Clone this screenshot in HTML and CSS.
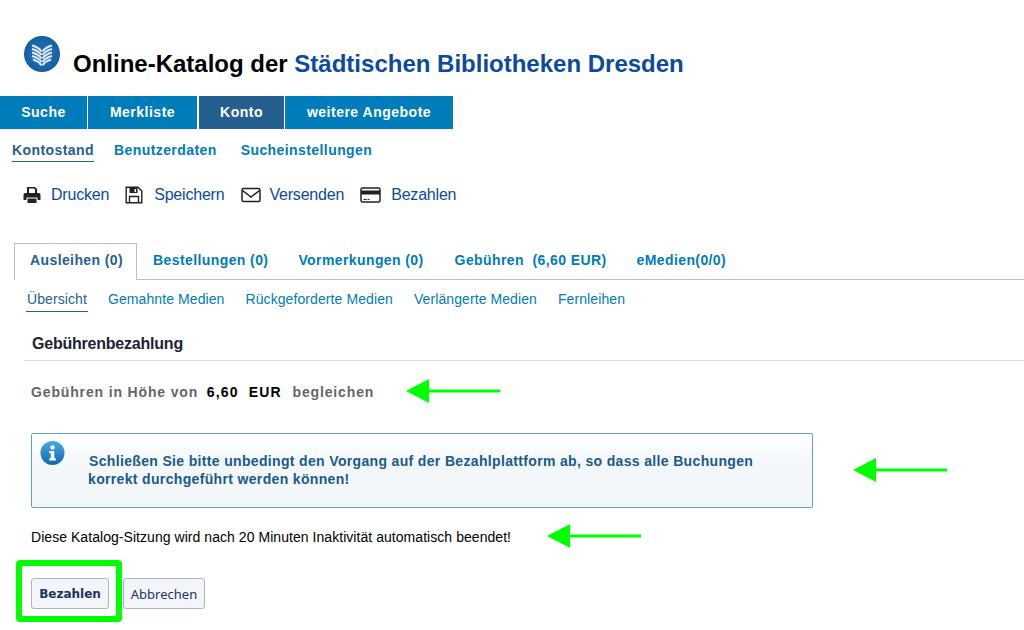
FILE: index.html
```html
<!DOCTYPE html>
<html lang="de">
<head>
<meta charset="utf-8">
<title>Online-Katalog der Städtischen Bibliotheken Dresden</title>
<link rel="stylesheet" href="styles.css">
</head>
<body>
<header class="brand">
  <svg class="logo" viewBox="0 0 36 36" aria-hidden="true">
    <defs>
      <radialGradient id="logoGrad" cx="0.5" cy="0.5" r="0.55">
        <stop offset="0.6" stop-color="#1a68b0"/>
        <stop offset="1" stop-color="#145a9c"/>
      </radialGradient>
    </defs>
    <circle cx="18" cy="18" r="18" fill="url(#logoGrad)"/>
    <g fill="none" stroke="#dfe9f3" stroke-width="2.100">
      <path d="M8 9.500 C12 10.500 15.500 12.500 17.500 15.500"/>
      <path d="M8 13 C12 14 15.500 16 17.500 19"/>
      <path d="M8 16.500 C12 17.500 15.500 19.500 17.500 22.500"/>
      <path d="M8 20 C12 21 15.500 23 17.500 26"/>
      <path d="M9 23.500 C12.500 24.500 15.500 26.500 17.500 29.300"/>
      <path d="M28 9.500 C24 10.500 20.500 12.500 18.500 15.500"/>
      <path d="M28 13 C24 14 20.500 16 18.500 19"/>
      <path d="M28 16.500 C24 17.500 20.500 19.500 18.500 22.500"/>
      <path d="M28 20 C24 21 20.500 23 18.500 26"/>
      <path d="M27 23.500 C23.500 24.500 20.500 26.500 18.500 29.300"/>
    </g>
  </svg>
  <h1 class="title">Online-Katalog der <span class="title-accent">Städtischen Bibliotheken Dresden</span></h1>
</header>

<nav class="mainnav">
  <a class="mainnav-item item-suche">Suche</a>
  <a class="mainnav-item item-merk">Merkliste</a>
  <a class="mainnav-item item-konto is-active">Konto</a>
  <a class="mainnav-item item-weitere">weitere Angebote</a>
</nav>

<nav class="subnav">
  <a class="subnav-item is-active">Kontostand</a>
  <a class="subnav-item">Benutzerdaten</a>
  <a class="subnav-item">Sucheinstellungen</a>
</nav>

<div class="tools">
  <a class="tool tool-print">
    <svg class="tool-icon" viewBox="0 0 18 18" aria-hidden="true">
      <path fill="#222" d="M4 1h8l2 2v4h-2V3.500L11 2.500H6V7H4z"/>
      <path fill="#222" d="M2.500 7h13A2 2 0 0 1 17.500 9v5h-3v-2.500h-11V14h-3V9a2 2 0 0 1 2-2z"/>
      <path fill="#222" d="M4.500 12.500h9V17h-9z"/>
    </svg>Drucken</a>
  <a class="tool tool-save">
    <svg class="tool-icon" viewBox="0 0 18 18" aria-hidden="true">
      <path fill="none" stroke="#222" stroke-width="1.400" d="M1.200 1.200h11.800L16.800 5v11.800H1.200z"/>
      <path fill="#222" d="M4.500 2h8v5h-8z"/>
      <path fill="#fff" d="M9.500 3h1.500v3H9.500z"/>
      <path fill="none" stroke="#222" stroke-width="1.400" d="M4.500 16.500v-6h9v6"/>
    </svg>Speichern</a>
  <a class="tool tool-mail">
    <svg class="tool-icon icon-mail" viewBox="0 0 20 16" aria-hidden="true">
      <rect x="1" y="1.500" width="18" height="13" rx="1.500" fill="none" stroke="#222" stroke-width="1.500"/>
      <path fill="none" stroke="#222" stroke-width="1.500" d="M1.500 3.500 10 10l8.500-6.500"/>
    </svg>Versenden</a>
  <a class="tool tool-pay">
    <svg class="tool-icon icon-card" viewBox="0 0 21 16" aria-hidden="true">
      <rect x="1" y="1" width="19" height="14" rx="1.500" fill="none" stroke="#222" stroke-width="1.500"/>
      <path fill="#222" d="M1 3.500h19v4H1zM3.500 12h3v1h-3zM7.500 12h2v1h-2z"/>
    </svg>Bezahlen</a>
</div>

<nav class="tabs">
  <a class="tab is-active">Ausleihen (0)</a>
  <a class="tab">Bestellungen (0)</a>
  <a class="tab">Vormerkungen (0)</a>
  <a class="tab tab-fees">Gebühren  (6,60 EUR)</a>
  <a class="tab">eMedien(0/0)</a>
</nav>

<nav class="subtabs">
  <a class="subtab is-active">Übersicht</a>
  <a class="subtab">Gemahnte Medien</a>
  <a class="subtab">Rückgeforderte Medien</a>
  <a class="subtab">Verlängerte Medien</a>
  <a class="subtab">Fernleihen</a>
</nav>

<main class="content">
  <h2 class="heading">Gebührenbezahlung</h2>
  <p class="amount">Gebühren in Höhe von <b class="amount-value">6,60  EUR</b> begleichen</p>
  <div class="notice">
    <svg class="notice-icon" viewBox="0 0 24 24" aria-hidden="true">
      <defs>
        <linearGradient id="infoGrad" x1="0" y1="0" x2="0" y2="1">
          <stop offset="0" stop-color="#4aa8e6"/>
          <stop offset="1" stop-color="#0f67ae"/>
        </linearGradient>
      </defs>
      <circle cx="12" cy="12" r="12" fill="url(#infoGrad)"/>
      <circle cx="12" cy="6.500" r="2.200" fill="#fff"/>
      <path fill="#fff" d="M8.800 10h5v7.200h1.500V19.500H8.800v-2.300h1.500v-4.900H8.800z"/>
    </svg>
    <p class="notice-text"><span class="notice-first">Schließen Sie bitte unbedingt den Vorgang auf der Bezahlplattform ab, so dass alle Buchungen</span><br>korrekt durchgeführt werden können!</p>
  </div>
  <p class="session">Diese Katalog-Sitzung wird nach 20 Minuten Inaktivität automatisch beendet!</p>
  <div class="buttons">
    <button class="btn btn-primary" type="button">Bezahlen</button>
    <button class="btn btn-secondary" type="button">Abbrechen</button>
  </div>
</main>

<svg class="arrow arrow-1" viewBox="0 0 94 24" aria-hidden="true"><path fill="#00ff00" d="M0 12 23 0v10.500h71v3H23V24z"/></svg>
<svg class="arrow arrow-2" viewBox="0 0 94 24" aria-hidden="true"><path fill="#00ff00" d="M0 12 23 0v10.500h71v3H23V24z"/></svg>
<svg class="arrow arrow-3" viewBox="0 0 94 24" aria-hidden="true"><path fill="#00ff00" d="M0 12 23 0v10.500h71v3H23V24z"/></svg>
<div class="highlight"></div>
</body>
</html>
```
FILE: styles.css
```css
html, body { margin: 0; padding: 0; }
body {
  position: relative;
  width: 1024px;
  height: 630px;
  overflow: hidden;
  background: #fff;
  font-family: "Liberation Sans", Arial, sans-serif;
  color: #000;
}
a { display: block; }

.brand { display: flex; align-items: flex-start; height: 96px; padding-left: 24px; box-sizing: border-box; padding-top: 36px; }
.logo { width: 36px; height: 36px; flex: none; }
.title { margin: 13px 0 0 13px; font-size: 24px; line-height: 30px; font-weight: 700; white-space: nowrap; }
.title-accent { color: #0b4a9c; }

.mainnav { display: flex; height: 33px; }
.mainnav-item { background: #007cba; color: #fff; font-size: 14px; font-weight: 700; line-height: 33px; letter-spacing: 0.5px; text-align: center; box-sizing: border-box; border-right: 1px solid #fff; }
.item-suche { width: 88px; }
.item-merk { width: 110px; }
.item-konto { width: 87px; background: #255f90; background-clip: padding-box; border-left: 1px solid #fff; }
.item-weitere { width: 168px; border-right: 0; }

.subnav { display: flex; height: 34px; padding-left: 12px; gap: 20px; }
.subnav-item { height: 33px; box-sizing: border-box; padding-top: 13px; font-size: 14px; line-height: 16px; font-weight: 700; letter-spacing: 0.42px; color: #007cba; }
.subnav-item + .subnav-item + .subnav-item { margin-left: 4px; }
.subnav-item.is-active { color: #255f90; border-bottom: 1px solid #255f90; }

.tools { display: flex; height: 63px; padding: 14px 0 0 23px; box-sizing: border-box; align-items: flex-start; }
.tool { display: flex; align-items: center; height: 36px; font-size: 16px; letter-spacing: -0.2px; color: #0b4a9c; }
.tool-icon { width: 18px; height: 18px; margin-right: 10px; }
.tool-save { margin-left: 16px; }
.tool-save .tool-icon { margin-right: 11px; }
.tool-mail { margin-left: 17px; }
.tool-pay { margin-left: 16px; }
.icon-mail { width: 20px; height: 16px; margin-right: 8px; }
.icon-card { width: 21px; height: 16px; margin-right: 10px; }

.tabs { display: flex; height: 37px; margin: 17px 0 0 14px; box-sizing: border-box; border-bottom: 1px solid #bdbdbd; }
.tab { padding: 0 13px 0 15px; height: 36px; line-height: 32px; font-size: 14px; font-weight: 700; letter-spacing: 0.4px; color: #007cba; white-space: pre; box-sizing: border-box; border: 1px solid transparent; border-bottom: 0; }
.tab.is-active { color: #255f90; background: #fff; border-color: #bdbdbd; height: 37px; }
.tab-fees { margin-left: 1px; }

.subtabs { display: flex; height: 32px; padding-left: 26px; gap: 19px; }
.subtab { height: 32px; box-sizing: border-box; padding: 10px 1px 0; font-size: 14px; line-height: 19px; letter-spacing: 0.09px; color: #007cba; }
.subtab.is-active { color: #255f90; border-bottom: 1px solid #255f90; }

.content { margin-left: 24px; }
.heading { margin: 0; height: 49px; box-sizing: border-box; padding: 22px 0 0 8px; font-size: 16px; line-height: 20px; font-weight: 700; letter-spacing: -0.22px; color: #1c2430; border-bottom: 1px solid #d9d9d9; }
.amount { margin: 22px 0 0 7px; height: 18px; font-size: 14px; line-height: 18px; font-weight: 700; letter-spacing: 0.85px; color: #666; white-space: pre; }
.amount-value { color: #000; margin: 0 6px 0 4px; letter-spacing: 1.15px; white-space: pre; }
.notice { position: relative; width: 782px; height: 75px; margin: 32px 0 0 7px; box-sizing: border-box; border: 1px solid #5d9fd0; border-radius: 2px; background: linear-gradient(#fff, #f3f7fa 45%); }
.notice-icon { position: absolute; left: 8px; top: 7px; width: 25px; height: 24px; }
.notice-text { margin: 0; padding: 18px 0 0 56px; font-size: 14px; line-height: 18px; font-weight: 700; letter-spacing: 0.34px; color: #1a5a8c; white-space: nowrap; }
.notice-first { margin-left: 1px; }
.session { margin: 20px 0 0 7px; font-size: 14px; line-height: 18px; letter-spacing: 0.05px; color: #000; }
.buttons { display: flex; gap: 14px; margin: 32px 0 0 7px; }
.btn { height: 31px; padding: 0; font-family: "Noto Sans", sans-serif; color: #1c3460; background: #f3f5fa; border: 1px solid #a9b5cb; border-radius: 3px; }
.btn-primary { width: 78px; font-weight: 700; font-family: "DejaVu Sans", sans-serif; font-size: 12px; }
.btn-secondary { width: 82px; font-size: 13px; }

.arrow { position: absolute; width: 94px; height: 24px; }
.arrow-1 { left: 406px; top: 379px; }
.arrow-2 { left: 853px; top: 458px; }
.arrow-3 { left: 547px; top: 524px; }
.highlight { position: absolute; left: 16px; top: 560px; width: 106px; height: 62px; box-sizing: border-box; border: 6px solid #00ff00; border-radius: 4px; }
```
